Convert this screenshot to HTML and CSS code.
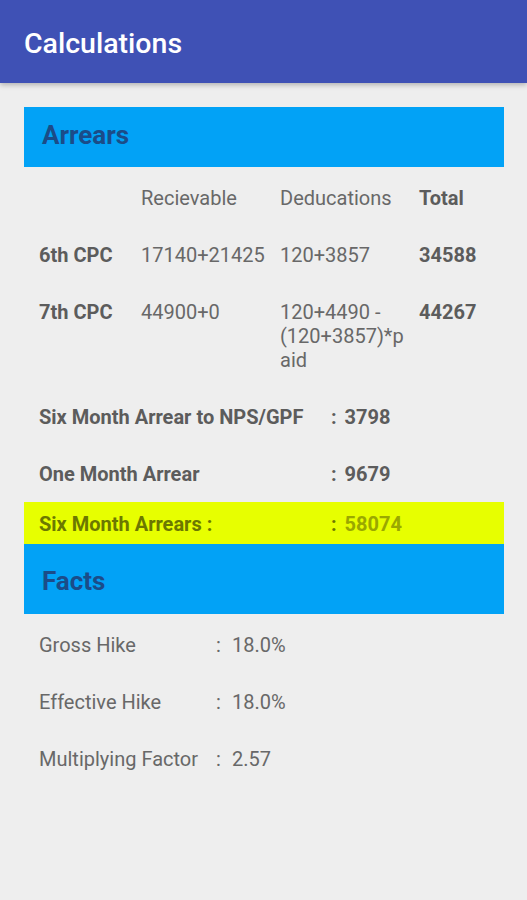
FILE: index.html
```html
<!DOCTYPE html>
<html lang="en">
<head>
  <meta charset="UTF-8" />
  <title>Calculations</title>
  <link rel="stylesheet" href="styles.css">
</head>
<body>

  <!-- App bar -->
  <header class="appbar">Calculations</header>

  <main class="content">

    <!-- Arrears -->
    <div class="section-head arrears-head">Arrears</div>

    <div class="cpc-table">
      <div class="cell"></div>
      <div class="cell">Recievable</div>
      <div class="cell">Deducations</div>
      <div class="cell bold">Total</div>

      <div class="cell bold">6th CPC</div>
      <div class="cell">17140+21425</div>
      <div class="cell">120+3857</div>
      <div class="cell bold">34588</div>

      <div class="cell bold">7th CPC</div>
      <div class="cell">44900+0</div>
      <div class="cell">120+4490 -<br>(120+3857)*p<br>aid</div>
      <div class="cell bold">44267</div>
    </div>

    <div class="summary-row">
      <span class="summary-label">Six Month Arrear to NPS/GPF</span>
      <span class="summary-value">: 3798</span>
    </div>
    <div class="summary-row">
      <span class="summary-label">One Month Arrear</span>
      <span class="summary-value">: 9679</span>
    </div>
    <div class="summary-row highlight">
      <span class="summary-label">Six Month Arrears :</span>
      <span class="summary-value"><span class="colon">:</span> 58074</span>
    </div>

    <!-- Facts -->
    <div class="section-head facts-head">Facts</div>

    <div class="fact-row">
      <span class="fact-label">Gross Hike</span>
      <span class="fact-colon">:</span>
      <span class="fact-value">18.0%</span>
    </div>
    <div class="fact-row">
      <span class="fact-label">Effective Hike</span>
      <span class="fact-colon">:</span>
      <span class="fact-value">18.0%</span>
    </div>
    <div class="fact-row">
      <span class="fact-label">Multiplying Factor</span>
      <span class="fact-colon">:</span>
      <span class="fact-value">2.57</span>
    </div>

  </main>

</body>
</html>
```

FILE: styles.css
```css
body {
  font-family: Roboto, "Noto Sans", Arial, sans-serif;
  margin: 0;
  padding: 0;
  background-color: #eeeeee;
  color: #686868;
  font-size: 20px;
}
.appbar {
  height: 83px;
  box-sizing: border-box;
  padding: 27px 24px 0;
  line-height: 34px;
  background-color: #3f51b5;
  color: white;
  font-size: 28.5px;
  font-weight: 500;
  box-shadow: 0px 2px 5px rgba(0, 0, 0, 0.25);
}
.content {
  padding: 24px 23px 40px 24px;
}
.section-head {
  background-color: #02a2f6;
  color: #1b4c88;
  font-size: 26px;
  font-weight: bold;
  padding-left: 18px;
  box-sizing: border-box;
}
.arrears-head {
  height: 60px;
  line-height: 56px;
}
.facts-head {
  height: 70px;
  line-height: 74px;
}
.cpc-table {
  display: grid;
  grid-template-columns: 102px 139px 139px 1fr;
  row-gap: 33px;
  padding: 19px 0 0 15px;
  line-height: 24px;
}
.bold {
  font-weight: bold;
  color: #5c5c5c;
}
.summary-row {
  display: flex;
  line-height: 24px;
  padding: 33px 0 0 15px;
  font-weight: bold;
  color: #5c5c5c;
}
.summary-label {
  width: 292px;
}
.summary-value {
  word-spacing: 3px;
}
.summary-row.highlight {
  margin-top: 16px;
  padding: 10px 0 8px 15px;
  background-color: #e7ff00;
  color: #6c7800;
}
.highlight .summary-value {
  color: #9aa800;
}
.highlight .colon {
  color: #6c7800;
}
.fact-row {
  display: flex;
  line-height: 24px;
  padding: 19px 0 14px 15px;
}
.fact-label {
  width: 177px;
}
.fact-colon {
  width: 16px;
}
```
